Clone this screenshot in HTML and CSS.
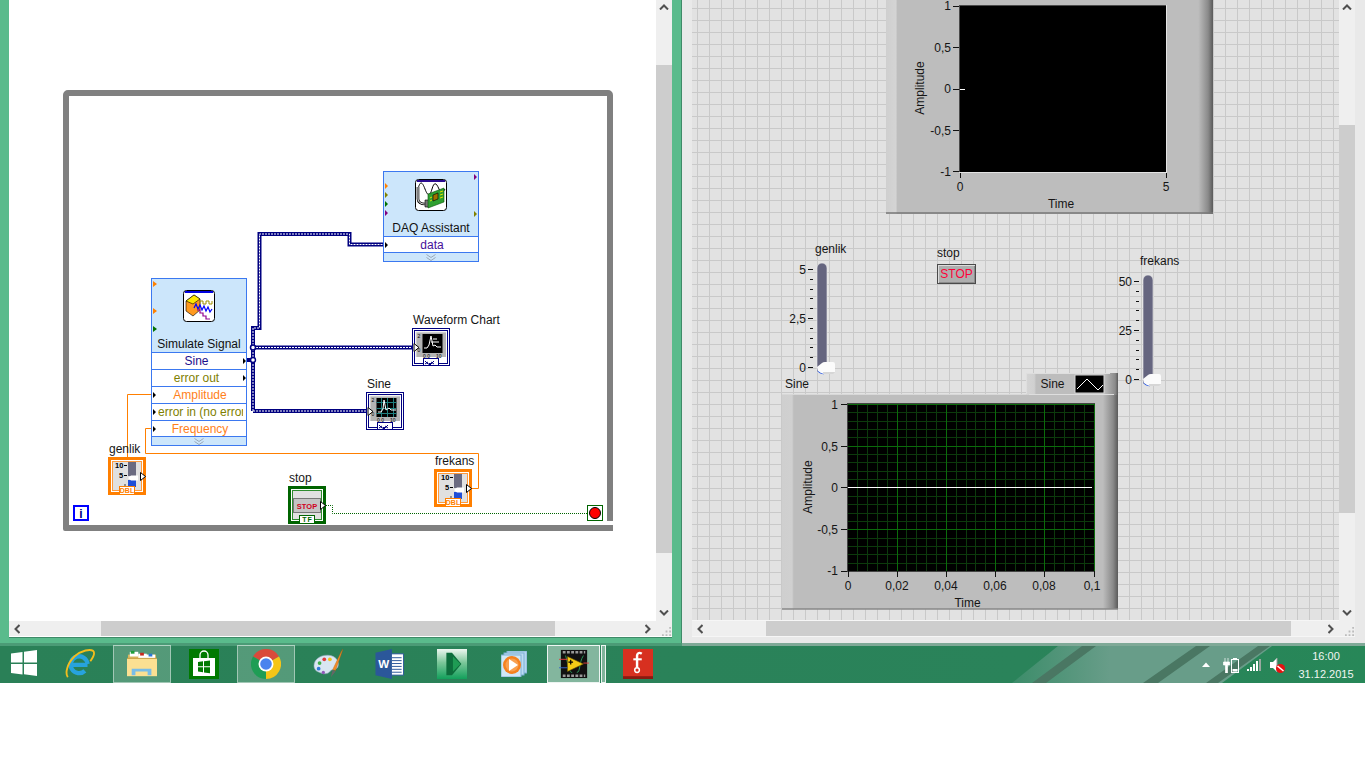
FILE: index.html
```html
<!DOCTYPE html>
<html lang="en">
<head>
<meta charset="utf-8">
<title>LabVIEW</title>
<link rel="stylesheet" href="styles.css">
</head>
<body>
<svg class="defs" aria-hidden="true">
  <symbol id="t-slider" viewBox="0 0 38 38">
    <rect x="1.500" y="1.500" width="35" height="35" fill="#fff" stroke="#ff7f00" stroke-width="3"/>
    <rect x="4.500" y="4.500" width="29" height="29" fill="#e0e0e0" stroke="#ff9a3c"/>
    <rect x="20" y="5" width="8" height="14" fill="#6a6a80"/>
    <rect x="20" y="23" width="8" height="7" fill="#1f4fd8"/>
    <path d="M20 21l3-2.500h7v5h-7z" fill="#fff"/>
    <path d="M16 8.500h3M16 18.500h3" stroke="#000"/>
    <circle cx="17" cy="28" r=".7"/>
    <rect x="11.500" y="29.500" width="15" height="8" fill="#fff" stroke="#ff7f00"/>
    <path d="M32.500 15.500l5 4-5 4z" fill="#fff" stroke="#000"/>
  </symbol>
  <symbol id="t-stop" viewBox="0 0 38 38">
    <rect x="1.500" y="1.500" width="35" height="35" fill="#fff" stroke="#006400" stroke-width="3"/>
    <rect x="4.500" y="4.500" width="29" height="29" fill="#e0e0e0" stroke="#2e8b2e"/>
    <rect x="5.500" y="12.500" width="27" height="14" fill="#c4c4c4" stroke="#777"/>
    <rect x="11.500" y="29.500" width="15" height="8" fill="#fff" stroke="#006400"/>
    <path d="M32.500 15.500l5 4-5 4z" fill="#fff" stroke="#000"/>
  </symbol>
  <symbol id="t-chart" viewBox="0 0 38 38">
    <rect x=".5" y=".5" width="37" height="37" fill="#fff" stroke="#000080"/>
    <rect x="2.500" y="2.500" width="33" height="33" fill="#fff" stroke="#000080"/>
    <rect x="4" y="4" width="30" height="25" fill="#b4b4b4"/>
    <path d="M4 4h30M4 4v25" stroke="#e8e8e8"/>
    <rect x="10.500" y="6" width="20" height="19" fill="#000"/>
    <path d="M12 20h3l2-3 2-9 2 10 2-1 2 2h4M19 14h8M21 11h4" stroke="#fff" fill="none"/>
    <path d="M2 15.500l5 4-5 4z" fill="#fff" stroke="#000"/>
    <rect x="11.500" y="30.500" width="15" height="7" fill="#fff" stroke="#000080"/>
    <path d="M13 33l3 3h3l3-3M13 36l3-2M22 36l-3-2" stroke="#000080" fill="none"/>
    <rect x="17" y="35" width="2" height="2" fill="#000080"/>
  </symbol>
  <symbol id="t-graph" viewBox="0 0 38 38">
    <rect x=".5" y=".5" width="37" height="37" fill="#fff" stroke="#000080"/>
    <rect x="2.500" y="2.500" width="33" height="33" fill="#fff" stroke="#000080"/>
    <rect x="4" y="4" width="30" height="25" fill="#b4b4b4"/>
    <path d="M4 4h30M4 4v25" stroke="#e8e8e8"/>
    <rect x="10.500" y="6" width="20" height="19" fill="#000"/>
    <path d="M15.500 6v19M21.500 6v19M27.500 6v19M10.500 10.500h20M10.500 16.500h20M10.500 21.500h20" stroke="#1f7f7f"/>
    <path d="M12 20h3l2-3 1-9 2 10 3-2 2 2h5" stroke="#fff" fill="none"/>
    <path d="M2 15.500l5 4-5 4z" fill="#fff" stroke="#000"/>
    <rect x="11.500" y="30.500" width="15" height="7" fill="#fff" stroke="#000080"/>
    <path d="M13 33l3 3h3l3-3M13 36l3-2M22 36l-3-2" stroke="#000080" fill="none"/>
    <rect x="17" y="35" width="2" height="2" fill="#000080"/>
  </symbol>
  <symbol id="a-up" viewBox="0 0 10 6"><path d="M1 5.500l4-4 4 4" fill="none" stroke="#505050" stroke-width="2"/></symbol>
  <symbol id="a-down" viewBox="0 0 10 6"><path d="M1 .5l4 4 4-4" fill="none" stroke="#505050" stroke-width="2"/></symbol>
  <symbol id="a-left" viewBox="0 0 6 10"><path d="M5.500 1l-4 4 4 4" fill="none" stroke="#505050" stroke-width="2"/></symbol>
  <symbol id="a-right" viewBox="0 0 6 10"><path d="M.5 1l4 4-4 4" fill="none" stroke="#505050" stroke-width="2"/></symbol>
  <symbol id="grip" viewBox="0 0 10 10"><path d="M8 0h2v2H8zM4 4h2v2H4zM8 4h2v2H8zM0 8h2v2H0zM4 8h2v2H4zM8 8h2v2H8z" fill="#bcbcbc"/></symbol>
</svg>

<div class="screen">
  <div class="desktop">
    <section class="window window-left">
      <div class="window-body">
        <div class="canvas diagram">
          <div class="loop"><span class="loop-notch"></span></div>

          <div class="express express-sim">
            <div class="express-head">
              <svg class="vi-icon" viewBox="0 0 32 32">
                <rect x=".5" y=".5" width="31" height="31" rx="3" fill="#fff" stroke="#000"/>
                <rect x="2" y="1" width="28" height="2" fill="#0000e0"/>
                <path d="M3 11l8-6 6 4v11l-7 6-7-5z" fill="#ff9a1f" stroke="#000" stroke-width=".6"/>
                <path d="M3 11l8-6 6 4-7 5z" fill="#ffe800" stroke="#000" stroke-width=".6"/>
                <path d="M17 14v-3h3v3h3v-3h3v3h3v-3" fill="none" stroke="#a09000"/>
                <path d="M11 18l2-4 2 5 2-4 2 5 2-4 2 5 2-4 2 5 2-3" fill="none" stroke="#0000ff" stroke-width="1.200"/>
                <path d="M14 20h3v3h3v3h3v3h4" fill="none" stroke="#900090" stroke-width="1.200"/>
              </svg>
              <div class="express-title">Simulate Signal</div>
            </div>
            <div class="row out c-navy"><span>Sine</span></div>
            <div class="row out c-olive"><span>error out</span></div>
            <div class="row in c-orange"><span>Amplitude</span></div>
            <div class="row clip c-olive"><span>error in (no error)</span></div>
            <div class="row row-short in c-orange"><span>Frequency</span></div>
            <div class="express-foot"><svg class="chevrons" viewBox="0 0 10 7"><path d="M.5 .5l4.500 3 4.500-3M.5 3.500l4.500 3 4.500-3" fill="none" stroke="#9aa8b8"/></svg></div>
          </div>

          <div class="express express-daq">
            <div class="express-head">
              <svg class="vi-icon" viewBox="0 0 32 32">
                <rect x=".5" y=".5" width="31" height="31" rx="3" fill="#fff" stroke="#000"/>
                <rect x="2" y="1" width="28" height="2" fill="#2a0a90"/>
                <path d="M3 10c2-8 4-8 7 0s5 7 7 0 4-7 7 0 4 3 6 0" fill="none" stroke="#000"/>
                <path d="M3 8v12c0 3 3 5 7 5" fill="none" stroke="#000" stroke-width="2.600"/>
                <path d="M3 8v12c0 3 3 5 7 5" fill="none" stroke="#fff" stroke-width="1"/>
                <path d="M10 21h4v7h-4z" fill="#777" stroke="#000" stroke-width=".6"/>
                <path d="M13 15l16-6v14l-16 6z" fill="#2fa030" stroke="#0a500a" stroke-width=".6"/>
                <path d="M18 16l5-2v6l-5 2z" fill="#a07000" stroke="#000" stroke-width=".6"/>
                <path d="M25 13l3-1M25 16l3-1M25 19l3-1M15 19l2-1M15 22l2-1" stroke="#e0e000"/>
              </svg>
              <div class="express-title">DAQ Assistant</div>
            </div>
            <div class="row row-short in c-purple"><span>data</span></div>
            <div class="express-foot"><svg class="chevrons" viewBox="0 0 10 7"><path d="M.5 .5l4.500 3 4.500-3M.5 3.500l4.500 3 4.500-3" fill="none" stroke="#9aa8b8"/></svg></div>
          </div>

          <svg class="overlay" viewBox="9 0 647 621">
            <path class="wire" d="M247 360H253M253 411V328H259.500V234H349.500V244.500H383M253 347.500H413M253 411H366"/>
            <path class="wire-core" d="M253 411V328H259.500V234H349.500V244.500H383M253 347.500H413M253 411H366"/>
            <circle class="junction" cx="253" cy="347.500" r="2.500"/>
            <circle class="junction" cx="253" cy="360" r="2.500"/>
            <path class="wire-num" d="M151 394.500H127.500V458M151 428.500H145.500V453.500H478.500V488.500H470"/>
            <path class="wire-bool" d="M326 505.500H332.500V513.500H587"/>

            <path d="M153 281l4 3-4 3zM153 308l4 3-4 3z" fill="#ff8000"/>
            <path d="M153 326l4 3-4 3z" fill="#007000"/>
            <path d="M385 183l3 3-3 3z" fill="#ff8000"/>
            <path d="M385 192l3 3-3 3z" fill="#808000"/>
            <path d="M385 201l3 3-3 3z" fill="#007000"/>
            <path d="M385 210l3 3-3 3zM474 174l3 3-3 3z" fill="#800080"/>
            <path d="M474 211l3 3-3 3z" fill="#808000"/>
            <path d="M243 358l3 3-3 3zM243 375l3 3-3 3zM153 392l3 3-3 3zM153 409l3 3-3 3zM153 426l3 3-3 3zM385 242l3 3-3 3z" fill="#000"/>

            <text class="lbl" x="109" y="453">genlik</text>
            <text class="lbl" x="289" y="482">stop</text>
            <text class="lbl" x="435" y="465">frekans</text>
            <text class="lbl" x="367" y="388">Sine</text>
            <text class="lbl" x="413" y="324">Waveform Chart</text>

            <g transform="translate(108 457)">
              <use href="#t-slider" width="38" height="38"/>
              <text class="mini" x="7" y="11">10</text>
              <text class="mini" x="11" y="21">5</text>
              <text class="tag tag-o" x="19" y="36">DBL</text>
            </g>
            <g transform="translate(434 469)">
              <use href="#t-slider" width="38" height="38"/>
              <text class="mini" x="7" y="11">10</text>
              <text class="mini" x="11" y="21">5</text>
              <text class="tag tag-o" x="19" y="36">DBL</text>
            </g>
            <g transform="translate(288 486)">
              <use href="#t-stop" width="38" height="38"/>
              <text class="mini-stop" x="19" y="22.500">STOP</text>
              <text class="tag tag-g" x="19.500" y="36">TF</text>
            </g>
            <g transform="translate(412 328)">
              <use href="#t-chart" width="38" height="38"/>
              <text class="nano" x="5.500" y="10">2</text>
              <text class="nano" x="5.500" y="24">0</text>
              <text class="nano" x="11" y="30">0.0</text>
              <text class="nano" x="24" y="30">10</text>
            </g>
            <g transform="translate(366 392)">
              <use href="#t-graph" width="38" height="38"/>
              <text class="nano" x="5.500" y="10">2</text>
              <text class="nano" x="5.500" y="24">0</text>
              <text class="nano" x="11" y="30">0.0</text>
              <text class="nano" x="24" y="30">10</text>
            </g>

            <rect x="74" y="506" width="14" height="14" fill="#fff" stroke="#0000ff" stroke-width="2"/>
            <text class="iter" x="81" y="517.500">i</text>
            <rect x="587.500" y="505.500" width="15" height="15" fill="#fff" stroke="#006400"/>
            <circle cx="595" cy="513" r="5.500" fill="#ff0000" stroke="#000"/>
          </svg>
        </div>
        <div class="vscroll">
          <svg class="arrow-v"><use href="#a-up"/></svg>
          <div class="thumb-v thumb-v-left"></div>
          <svg class="arrow-v arrow-end"><use href="#a-down"/></svg>
        </div>
      </div>
      <div class="hscroll">
        <svg class="arrow-h"><use href="#a-left"/></svg>
        <div class="thumb-h thumb-h-left"></div>
        <svg class="arrow-h arrow-end"><use href="#a-right"/></svg>
        <div class="corner"><svg class="grip"><use href="#grip"/></svg></div>
      </div>
    </section>

    <section class="window window-right">
      <div class="window-body">
        <div class="canvas panel">
          <svg class="overlay" viewBox="692 0 647 621">
            <defs>
              <linearGradient id="frame-top" gradientUnits="userSpaceOnUse" x1="886" x2="1213" y1="0" y2="0">
                <stop offset="0" stop-color="#cfcfcf"/><stop offset=".03" stop-color="#d4d4d4"/><stop offset=".035" stop-color="#bdbdbd"/>
                <stop offset=".955" stop-color="#bdbdbd"/><stop offset=".985" stop-color="#8a8a8a"/><stop offset="1" stop-color="#5a5a5a"/>
              </linearGradient>
              <linearGradient id="frame-low" gradientUnits="userSpaceOnUse" x1="782" x2="1118" y1="0" y2="0">
                <stop offset="0" stop-color="#cfcfcf"/><stop offset=".03" stop-color="#d0d0d0"/><stop offset=".035" stop-color="#bdbdbd"/>
                <stop offset=".955" stop-color="#bdbdbd"/><stop offset=".985" stop-color="#8a8a8a"/><stop offset="1" stop-color="#5a5a5a"/>
              </linearGradient>
              <linearGradient id="frame-leg" gradientUnits="userSpaceOnUse" x1="1026" x2="1118" y1="0" y2="0">
                <stop offset="0" stop-color="#d4d4d4"/><stop offset=".09" stop-color="#d0d0d0"/><stop offset=".11" stop-color="#bdbdbd"/>
                <stop offset=".85" stop-color="#bdbdbd"/><stop offset=".97" stop-color="#8a8a8a"/><stop offset="1" stop-color="#5a5a5a"/>
              </linearGradient>
            </defs>

            <!-- upper chart -->
            <rect x="886" y="-10" width="327" height="224" fill="url(#frame-top)"/>
            <path d="M886 213H1213" stroke="#777" stroke-width="1.500"/>
            <rect x="959" y="5" width="208" height="168" fill="#000"/>
            <path d="M959 5.500H1167M959.500 5V173" stroke="#4a4a4a"/>
            <path d="M959 172.500H1167M1166.500 5V173" stroke="#e4e4e4"/>
            <path d="M953 6.500H959M953 47.500H959M953 89.500H959M953 130.500H959M953 171.500H959M960.500 173V178M1166.500 173V178" stroke="#111"/>
            <path d="M960 89.500H965" stroke="#fff"/>
            <text class="tk end" x="951" y="10">1</text>
            <text class="tk end" x="951" y="52">0,5</text>
            <text class="tk end" x="951" y="93">0</text>
            <text class="tk end" x="951" y="135">-0,5</text>
            <text class="tk end" x="951" y="176">-1</text>
            <text class="tk mid" x="960" y="191">0</text>
            <text class="tk mid" x="1166" y="191">5</text>
            <text class="tk mid" x="1061" y="208">Time</text>
            <text class="tk mid" transform="translate(924 88) rotate(-90)">Amplitude</text>

            <!-- sliders -->
            <text class="tk" x="815" y="253">genlik</text>
            <text class="tk" x="937" y="257">stop</text>
            <text class="tk" x="1140" y="265">frekans</text>
            <text class="tk" x="785" y="388">Sine</text>
            <g>
              <path d="M817 372V268a5 5 0 0 1 10 0V372z" fill="#65657f" stroke="#eee" stroke-width=".6"/>
              <path d="M808 269.500H813M808 318.500H813M808 367.500H813M810 279.500H813M810 289.500H813M810 298.500H813M810 308.500H813M810 328.500H813M810 338.500H813M810 347.500H813M810 357.500H813" stroke="#111"/>
              <text class="tk end" x="806" y="274">5</text>
              <text class="tk end" x="806" y="323">2,5</text>
              <text class="tk end" x="806" y="372">0</text>
              <path d="M818 370.500c1 2 3 3 6 3" fill="none" stroke="#1f50e0" stroke-width="1.300"/>
              <path d="M817 367l5-4q1-1 3-1h8q2 0 2 2v8q0 2-2 2h-8q-2 0-4-1l-3-2z" fill="#fbfbfb"/>
              <path d="M823 372h12q0 2-2 2h-8q-1 0-2-.5z" fill="#d6d6d6"/>
            </g>
            <g>
              <path d="M1143 384V280a5 5 0 0 1 10 0V384z" fill="#65657f" stroke="#eee" stroke-width=".6"/>
              <path d="M1134 281.500H1139M1134 330.500H1139M1134 379.500H1139M1136 291.500H1139M1136 301.500H1139M1136 310.500H1139M1136 320.500H1139M1136 340.500H1139M1136 350.500H1139M1136 359.500H1139M1136 369.500H1139" stroke="#111"/>
              <text class="tk end" x="1132" y="286">50</text>
              <text class="tk end" x="1132" y="335">25</text>
              <text class="tk end" x="1132" y="384">0</text>
              <path d="M1144 382.500c1 2 3 3 6 3" fill="none" stroke="#1f50e0" stroke-width="1.300"/>
              <path d="M1143 379l5-4q1-1 3-1h8q2 0 2 2v8q0 2-2 2h-8q-2 0-4-1l-3-2z" fill="#fbfbfb"/>
              <path d="M1149 384h12q0 2-2 2h-8q-1 0-2-.5z" fill="#d6d6d6"/>
            </g>

            <!-- lower graph -->
            <rect x="782" y="394" width="336" height="215" fill="url(#frame-low)"/>
            <path d="M782 394.500H1026" stroke="#d8d8d8"/>
            <path d="M782 609H1118" stroke="#888" stroke-width="1.500"/>
            <rect x="1026" y="373" width="92" height="22" fill="url(#frame-leg)"/>
            <path d="M1026 373.500H1110M1026.500 373V394M1029 394.500H1114" stroke="#dedede"/>
            <rect x="1075" y="375" width="29" height="18" fill="#000" stroke="#d8d8d8"/>
            <path d="M1077 389l10-10 11 11 5-5" fill="none" stroke="#fff"/>
            <text class="tk mid" x="1052.500" y="388">Sine</text>

            <rect x="847" y="403" width="248" height="169" fill="#000"/>
            <path class="minor" d="M857.500 403V571M867.500 403V571M877.500 403V571M887.500 403V571M906.500 403V571M916.500 403V571M926.500 403V571M936.500 403V571M956.500 403V571M966.500 403V571M975.500 403V571M985.500 403V571M1005.500 403V571M1015.500 403V571M1025.500 403V571M1035.500 403V571M1054.500 403V571M1064.500 403V571M1074.500 403V571M1084.500 403V571M847 412.500H1094M847 421.500H1094M847 429.500H1094M847 437.500H1094M847 454.500H1094M847 462.500H1094M847 471.500H1094M847 479.500H1094M847 496.500H1094M847 504.500H1094M847 513.500H1094M847 521.500H1094M847 538.500H1094M847 546.500H1094M847 554.500H1094M847 563.500H1094"/>
            <path class="major" d="M897.500 403V571M946.500 403V571M995.500 403V571M1044.500 403V571M1094.500 403V571M847 404.500H1094M847 446.500H1094M847 529.500H1094"/>
            <path d="M847 403.500H1095M847.500 403V572M847 571.500H1095" stroke="#444"/>
            <path d="M848 487.500H1092" stroke="#fff" stroke-width="1.200"/>
            <path d="M841 404.500H847M841 446.500H847M841 487.500H847M841 529.500H847M841 571.500H847M848.500 571V577M897.500 571V577M946.500 571V577M995.500 571V577M1044.500 571V577M1094.500 571V577" stroke="#111"/>
            <text class="tk end" x="838" y="409">1</text>
            <text class="tk end" x="838" y="451">0,5</text>
            <text class="tk end" x="838" y="492">0</text>
            <text class="tk end" x="838" y="534">-0,5</text>
            <text class="tk end" x="838" y="575">-1</text>
            <text class="tk mid" x="848" y="590">0</text>
            <text class="tk mid" x="897" y="590">0,02</text>
            <text class="tk mid" x="946" y="590">0,04</text>
            <text class="tk mid" x="995" y="590">0,06</text>
            <text class="tk mid" x="1044" y="590">0,08</text>
            <text class="tk mid" x="1092" y="590">0,1</text>
            <text class="tk mid" x="967.500" y="607">Time</text>
            <text class="tk mid" transform="translate(812 487) rotate(-90)">Amplitude</text>
          </svg>
          <button class="stop-btn">STOP</button>
        </div>
        <div class="vscroll">
          <svg class="arrow-v"><use href="#a-up"/></svg>
          <div class="thumb-v thumb-v-right"></div>
          <svg class="arrow-v arrow-end"><use href="#a-down"/></svg>
        </div>
      </div>
      <div class="hscroll">
        <svg class="arrow-h"><use href="#a-left"/></svg>
        <div class="thumb-h thumb-h-right"></div>
        <svg class="arrow-h arrow-end"><use href="#a-right"/></svg>
        <div class="corner"><svg class="grip"><use href="#grip"/></svg></div>
      </div>
    </section>
  </div>

  <footer class="taskbar">
    <svg class="wallpaper" viewBox="0 0 1365 37" preserveAspectRatio="none">
      <defs>
        <linearGradient id="wp" gradientUnits="userSpaceOnUse" x1="1010" x2="1110" y1="0" y2="0">
          <stop offset="0" stop-color="#3b8c69"/><stop offset="1" stop-color="#689d89"/>
        </linearGradient>
      </defs>
      <path d="M1012 37L1058 0H1272L1222 37z" fill="url(#wp)"/>
      <path d="M1032 37L1082 0H1096L1046 37zM1143 37L1196 0H1210L1158 37zM1206 37L1258 0H1270L1218 37z" fill="#4a7763"/>
    </svg>
    <div class="start"><svg class="ico-start" viewBox="0 0 26 26"><path d="M0 3.500L11.500 2v10.500H0zM13 1.800L26 0v12.500H13zM0 14h11.500v10.500L0 23zM13 14h13v12l-13-1.800z" fill="#fff"/></svg></div>

    <div class="task"><svg class="ico" viewBox="0 0 32 32">
      <path d="M24 17H8M24 16a9 9 0 1 0-2.800 7.300" fill="none" stroke="#27a3dd" stroke-width="4.600"/>
      <path d="M3 30C0 26 2 16 10 8 18 1 27 0 30 2c2 2 0 7-3 11" fill="none" stroke="#f2bd1d" stroke-width="2"/>
    </svg></div>

    <div class="task active"><span class="task-box"><svg class="ico" viewBox="0 0 32 30">
      <path d="M1 5h30v21H1z" fill="#d8b660"/>
      <path d="M3 2h9v5H3z" fill="#fff"/><path d="M4 1h4v3H4z" fill="#1e9e3a"/>
      <path d="M12 4h9v5h-9z" fill="#fff"/><path d="M14 3h4v3h-4z" fill="#c8281e"/>
      <path d="M20 5h10v4H20z" fill="#fff"/><path d="M23 4h4v3h-4z" fill="#2a78d8"/>
      <path d="M0 9h32v19H0z" fill="#fbe092"/>
      <path d="M5 27v-7h21v7h-4v-4H9v4z" fill="#79bde8"/>
      <path d="M0 9h32" stroke="#c49c40"/>
    </svg></span></div>

    <div class="task"><svg class="ico" viewBox="0 0 30 30">
      <rect width="30" height="30" fill="#007a00"/>
      <path d="M11 9V6a4 4 0 0 1 8 0v3" fill="none" stroke="#fff" stroke-width="1.300"/>
      <path d="M4 9h22v18H4z" fill="#fff"/>
      <path d="M9 13l5-.7v5H9zM15 12.200l6-.8v5.900h-6zM9 18.300h5v5l-5-.7zM15 18.300h6v6l-6-.8z" fill="#007a00"/>
    </svg></div>

    <div class="task active"><span class="task-box"><svg class="ico" viewBox="0 0 30 30">
      <path d="M15 15L2 7.500A15 15 0 0 1 28 7.500z" fill="#d94a3b"/>
      <path d="M15 15L28 7.500A15 15 0 0 1 15 30z" fill="#f5c518"/>
      <path d="M15 15L15 30A15 15 0 0 1 2 7.500z" fill="#1f9d55"/>
      <circle cx="15" cy="15" r="7.500" fill="#fff"/>
      <circle cx="15" cy="15" r="5.800" fill="#4a84ee"/>
    </svg></span></div>

    <div class="task"><svg class="ico" viewBox="0 0 32 32">
      <path d="M1 18C1 10 10 5 19 7c7 2 10 8 7 13-2 3-6 1-8 4-2 3-7 3-11 1-4-1-6-4-6-7z" fill="#d9e6f2" stroke="#8da4b8" stroke-width=".6"/>
      <circle cx="7" cy="15" r="2" fill="#3fae49"/><circle cx="12" cy="11" r="2" fill="#e23b3b"/><circle cx="6" cy="21" r="2" fill="#2f78d6"/><circle cx="18" cy="11" r="2" fill="#f2c21d"/><circle cx="11" cy="25" r="1.800" fill="#8f5bb8"/>
      <path d="M32 0l-2 3-9 19 3 1z" fill="#f28c28" stroke="#a85a10" stroke-width=".4"/>
      <path d="M21 22l-2 8 5-6z" fill="#666"/>
    </svg></div>

    <div class="task"><svg class="ico" viewBox="0 0 30 31">
      <path d="M15 5h14v22H15z" fill="#fff" stroke="#2b579a"/>
      <path d="M17 9h10M17 12h10M17 15h10M17 18h10M17 21h10M17 24h10" stroke="#2b579a"/>
      <path d="M0 4L17 0v31L0 27z" fill="#2b579a"/>
      <text class="word" x="8.500" y="20">W</text>
    </svg></div>

    <div class="task"><svg class="ico" viewBox="0 0 32 32">
      <defs><linearGradient id="gr" x1="0" x2="0" y1="0" y2="1"><stop offset="0" stop-color="#eef7f1"/><stop offset=".45" stop-color="#7cc79a"/><stop offset="1" stop-color="#12a05b"/></linearGradient></defs>
      <rect width="32" height="32" fill="url(#gr)"/>
      <path d="M10 4h6l10 12-10 12h-6z" fill="#0d6d3c"/>
      <path d="M17 8l8 8-8 8z" fill="#1f9b54"/>
    </svg></div>

    <div class="task"><svg class="ico-wmp" viewBox="0 0 26 26">
      <rect x="6" y="0" width="20" height="22" fill="#b6d6ee" stroke="#7fb0d6"/>
      <rect x="3" y="2" width="20" height="22" fill="#bcdcf2" stroke="#7fb0d6"/>
      <rect x="0" y="4" width="20" height="22" fill="#d0e8f8" stroke="#7fb0d6"/>
      <circle cx="11" cy="14" r="9" fill="#f5811f"/>
      <circle cx="11" cy="14" r="6.500" fill="#f9a050"/>
      <path d="M8 8l9 6-9 6z" fill="#fff"/>
    </svg></div>

    <div class="task task-lv"><span class="task-box"><svg class="ico" viewBox="0 0 32 32">
      <rect x="2" y="1" width="28" height="30" fill="#111"/>
      <path d="M4 3.500h24M4 28.500h24" stroke="#999" stroke-width="2.500" stroke-dasharray="3 1.500"/>
      <path d="M7 7c4 14 4 18 7 18M26 7c-5 8-3 18-7 18" fill="none" stroke="#2c9a5c"/>
      <path d="M9 8l17 8-17 8z" fill="#f3cc16" stroke="#6a5500" stroke-width=".6"/>
      <path d="M10 14h5M12.500 11.500v5" stroke="#000" stroke-width="1.300"/>
      <path d="M0 11h9" stroke="#e04040"/><path d="M0 20h9" stroke="#3a68c8"/><path d="M26 15h6" stroke="#e04040"/>
    </svg></span><span class="task-edge"></span></div>

    <div class="task"><svg class="ico" viewBox="0 0 32 32">
      <rect width="32" height="32" fill="#d73020"/>
      <rect y="29" width="32" height="3" fill="#8a1a10"/>
      <path d="M20 5c-3-2-5 0-5 2v13" fill="none" stroke="#fff" stroke-width="2.600"/>
      <path d="M11 11h9" stroke="#fff" stroke-width="2.200"/>
      <circle cx="15" cy="22.500" r="2.500" fill="none" stroke="#fff" stroke-width="1.600"/>
    </svg></div>

    <div class="tray">
      <svg class="tray-up" viewBox="0 0 8 5"><path d="M0 5l4-4.500L8 5z" fill="#fff"/></svg>
      <svg class="tray-ico" viewBox="0 0 16 16">
        <path d="M2 1v4M5 1v4M0.500 5h6v3h-2v8h-2v-8h-2z" fill="#fff" stroke="#fff" stroke-width=".7"/>
        <rect x="8.500" y="2.500" width="7" height="13" fill="none" stroke="#fff"/>
        <rect x="10" y="1" width="4" height="1.500" fill="#fff"/>
        <rect x="9.500" y="12" width="5" height="2.500" fill="#fff"/>
      </svg>
      <svg class="tray-ico" viewBox="0 0 16 16"><path d="M1 12h2v2H1z" fill="#fff"/><path d="M4 10h2v4H4z" fill="#fff"/><path d="M7 7h2v7H7z" fill="#fff"/><path d="M10 4h2v10h-2z" fill="#fff"/><path d="M13 2h2v12h-2z" fill="#9aa8a0"/></svg>
      <svg class="tray-ico" viewBox="0 0 16 16">
        <path d="M1 5h3l4-4v14l-4-4H1z" fill="#fff"/><path d="M8 1v14" stroke="#999"/>
        <circle cx="11.500" cy="11.500" r="4.500" fill="#e81010"/><path d="M8.500 9l6 5" stroke="#fff" stroke-width="1.600"/>
      </svg>
      <div class="clock"><div>16:00</div><div>31.12.2015</div></div>
    </div>
  </footer>
</div>
</body>
</html>
```

FILE: styles.css
```css
* { box-sizing: border-box; }

html, body {
  margin: 0;
  padding: 0;
  background: #fff;
}

body {
  width: 1366px;
  height: 768px;
  overflow: hidden;
  font: 12px "Liberation Sans", Arial, sans-serif;
  color: #111;
}

.defs { position: absolute; width: 0; height: 0; }

.screen {
  width: 1365px;
  height: 683px;
  display: flex;
  flex-direction: column;
}

.desktop {
  display: flex;
  height: 643px;
  flex: none;
}

/* windows */
.window {
  display: flex;
  flex-direction: column;
  height: 643px;
}

.window-left {
  width: 682px;
  padding: 0 9px 0 9px;
  background: #5abb8c;
  border-right: 1px solid #3f8a68;
}

.window-right {
  width: 683px;
  padding: 0 10px;
  background: #e9e9e9;
}

.window-body {
  display: flex;
  height: 621px;
  flex: none;
}

.canvas {
  position: relative;
  flex: 1;
  overflow: hidden;
}

.diagram { background: #fff; }

.panel {
  background-color: #e2e2e2;
  background-image:
    linear-gradient(#c9c9c9 1px, transparent 1px),
    linear-gradient(90deg, #c9c9c9 1px, transparent 1px);
  background-size: 12px 12px;
  background-position: 5px 8px;
  box-shadow: inset 0 -1px 0 #f6f6f6;
}

.overlay {
  position: absolute;
  left: 0;
  top: 0;
  width: 100%;
  height: 100%;
  display: block;
}

/* scrollbars */
.vscroll {
  width: 16px;
  flex: none;
  display: flex;
  flex-direction: column;
  align-items: center;
  background: #efefef;
}

.arrow-v {
  width: 10px;
  height: 6px;
  margin: 4px 0 5px;
  flex: none;
}

.arrow-h {
  width: 6px;
  height: 10px;
  margin: 0 5px;
  flex: none;
}

.arrow-end { margin-top: auto; }
.hscroll .arrow-end { margin: 0 5px 0 auto; }

.thumb-v {
  width: 16px;
  background: #cdcdcd;
  flex: none;
}

.thumb-v-left { height: 488px; margin-top: 50px; }
.thumb-v-right { height: 388px; margin-top: 110px; }

.hscroll {
  display: flex;
  align-items: center;
  height: 15px;
  flex: none;
  background: #efefef;
  box-shadow: 0 1px 0 #fff, 0 2px 0 #3f8a68;
}

.window-right .hscroll { box-shadow: 0 1px 0 #f6f6f6; }

.thumb-h {
  height: 15px;
  background: #cdcdcd;
  flex: none;
}

.thumb-h-left { width: 454px; margin-left: 76px; }
.thumb-h-right { width: 525px; margin-left: 58px; }

.corner {
  width: 16px;
  height: 15px;
  flex: none;
  background: #efefef;
  position: relative;
}

.grip {
  position: absolute;
  right: 1px;
  bottom: 0;
  width: 9px;
  height: 9px;
}

/* block diagram */
.loop {
  position: absolute;
  left: 54px;
  top: 90px;
  width: 550px;
  height: 441px;
  border: 6px solid #808080;
  border-radius: 5px 5px 0 2px;
}

.loop-notch {
  position: absolute;
  right: -6px;
  bottom: 0;
  width: 8px;
  height: 4px;
  background: #fff;
}

.express {
  position: absolute;
  width: 96px;
  border: 1px solid #3b78f0;
  background: #fff;
  display: flex;
  flex-direction: column;
}

.express-sim { left: 142px; top: 278px; }
.express-daq { left: 374px; top: 171px; }

.express-head {
  display: flex;
  flex-direction: column;
  align-items: center;
  background: #cce6fb;
  border-bottom: 1px solid #3b78f0;
}

.express-sim .express-head { height: 74px; padding-top: 11px; }
.express-sim .express-title { margin-top: 14px; }
.express-daq .express-head { height: 65px; padding-top: 7px; }
.express-daq .express-title { margin-top: 9px; }

.vi-icon { width: 32px; height: 32px; display: block; flex: none; }

.express-title {
  line-height: 16px;
  color: #111;
  white-space: nowrap;
}

.row {
  height: 17px;
  line-height: 16px;
  border-bottom: 1px solid #3b78f0;
  text-align: center;
  white-space: nowrap;
  overflow: hidden;
}

.row-short { height: 16px; }
.row.out { padding-right: 5px; }
.row.in { padding-left: 2px; }
.row.clip { text-align: left; padding: 0 3px 0 6px; }
.row.clip span { display: block; overflow: hidden; }

.c-navy { color: #1c0f8c; }
.c-olive { color: #7f7f00; }
.c-orange { color: #ff7f1a; }
.c-purple { color: #46109a; }

.express-foot {
  height: 8px;
  background: #cce6fb;
  display: flex;
  justify-content: center;
  align-items: center;
}

.chevrons { width: 10px; height: 7px; }

.wire { fill: none; stroke: #000080; stroke-width: 4; }
.wire-core { fill: none; stroke: #fff; stroke-width: 1; stroke-dasharray: 2 1; }
.junction { fill: #fff; stroke: #000080; stroke-width: 1.500; }
.wire-num { fill: none; stroke: #ff7f00; stroke-width: 1; }
.wire-bool { fill: none; stroke: #006400; stroke-width: 1; stroke-dasharray: 1 1; }

.lbl, .tk {
  font: 12px "Liberation Sans", Arial, sans-serif;
  fill: #151515;
}

.end { text-anchor: end; }
.mid { text-anchor: middle; }

.iter {
  font: bold 12px "Liberation Sans", Arial, sans-serif;
  fill: #000080;
  text-anchor: middle;
}

.mini { font: bold 7.500px "Liberation Sans", Arial, sans-serif; fill: #000; }
.nano { font: 5px "Liberation Sans", Arial, sans-serif; fill: #000; }
.mini-stop {
  font: bold 7.500px "Liberation Sans", Arial, sans-serif;
  fill: #d00020;
  text-anchor: middle;
}
.tag {
  font: bold 7px "Liberation Sans", Arial, sans-serif;
  text-anchor: middle;
}
.tag-o { fill: #ff7f00; }
.tag-g { fill: #006400; letter-spacing: 1px; }

.minor { stroke: #0c3a0c; fill: none; }
.major { stroke: #0b6b0b; fill: none; }

/* front panel */
.stop-btn {
  position: absolute;
  left: 245px;
  top: 264px;
  width: 39px;
  height: 20px;
  padding: 0;
  border: 1px solid #4a4a4a;
  box-shadow: inset 1px 1px 0 #dcdcdc, inset -1px -1px 0 #8a8a8a;
  background: #aeaeae;
  color: #ff0038;
  font: 12px "Liberation Sans", Arial, sans-serif;
}

/* taskbar */
.taskbar {
  position: relative;
  display: flex;
  height: 40px;
  flex: none;
  border-top: 3px solid transparent;
  background:
    linear-gradient(90deg, #4b9b76 0 682px, #7fa997 682px) top / 100% 3px no-repeat border-box,
    linear-gradient(90deg, #2a8057, #2a835a 75%, #278758 100%) border-box;
}

.wallpaper {
  position: absolute;
  left: 0;
  top: 0;
  width: 100%;
  height: 100%;
}

.start {
  position: relative;
  width: 49px;
  flex: none;
  padding: 4px 0 0 11px;
}

.ico-start { width: 26px; height: 26px; display: block; }

.task {
  position: relative;
  width: 62px;
  flex: none;
  display: flex;
  align-items: center;
  justify-content: center;
  margin-top: -1px;
  height: 38px;
}

.ico { width: 30px; height: 30px; display: block; flex: none; }
.ico-wmp { width: 26px; height: 26px; display: block; }

.task-box {
  width: 58px;
  height: 38px;
  display: flex;
  align-items: center;
  justify-content: center;
}

.task.active .task-box {
  background: rgba(255, 255, 255, .2);
  border: 1px solid rgba(255, 255, 255, .45);
}

.task-lv { justify-content: flex-start; padding-left: 2px; }

.task-lv .task-box {
  width: 53px;
  background: rgba(255, 255, 255, .42);
  border: 1px solid rgba(255, 255, 255, .85);
}

.task-edge {
  width: 5px;
  height: 38px;
  margin-left: 1px;
  flex: none;
  background: rgba(255, 255, 255, .4);
  border: 1px solid rgba(255, 255, 255, .85);
}

.tray {
  position: relative;
  margin-left: auto;
  display: flex;
  align-items: center;
  padding-right: 11px;
  color: #f2f6f3;
}

.tray-up { width: 8px; height: 5px; margin-right: 13px; }
.tray-ico { width: 16px; height: 16px; margin-right: 7px; }

.word {
  font: bold 12px "Liberation Sans", Arial, sans-serif;
  fill: #fff;
  text-anchor: middle;
}

.clock {
  width: 56px;
  margin-left: 6px;
  font-size: 11px;
  line-height: 18px;
  text-align: center;
}
```
